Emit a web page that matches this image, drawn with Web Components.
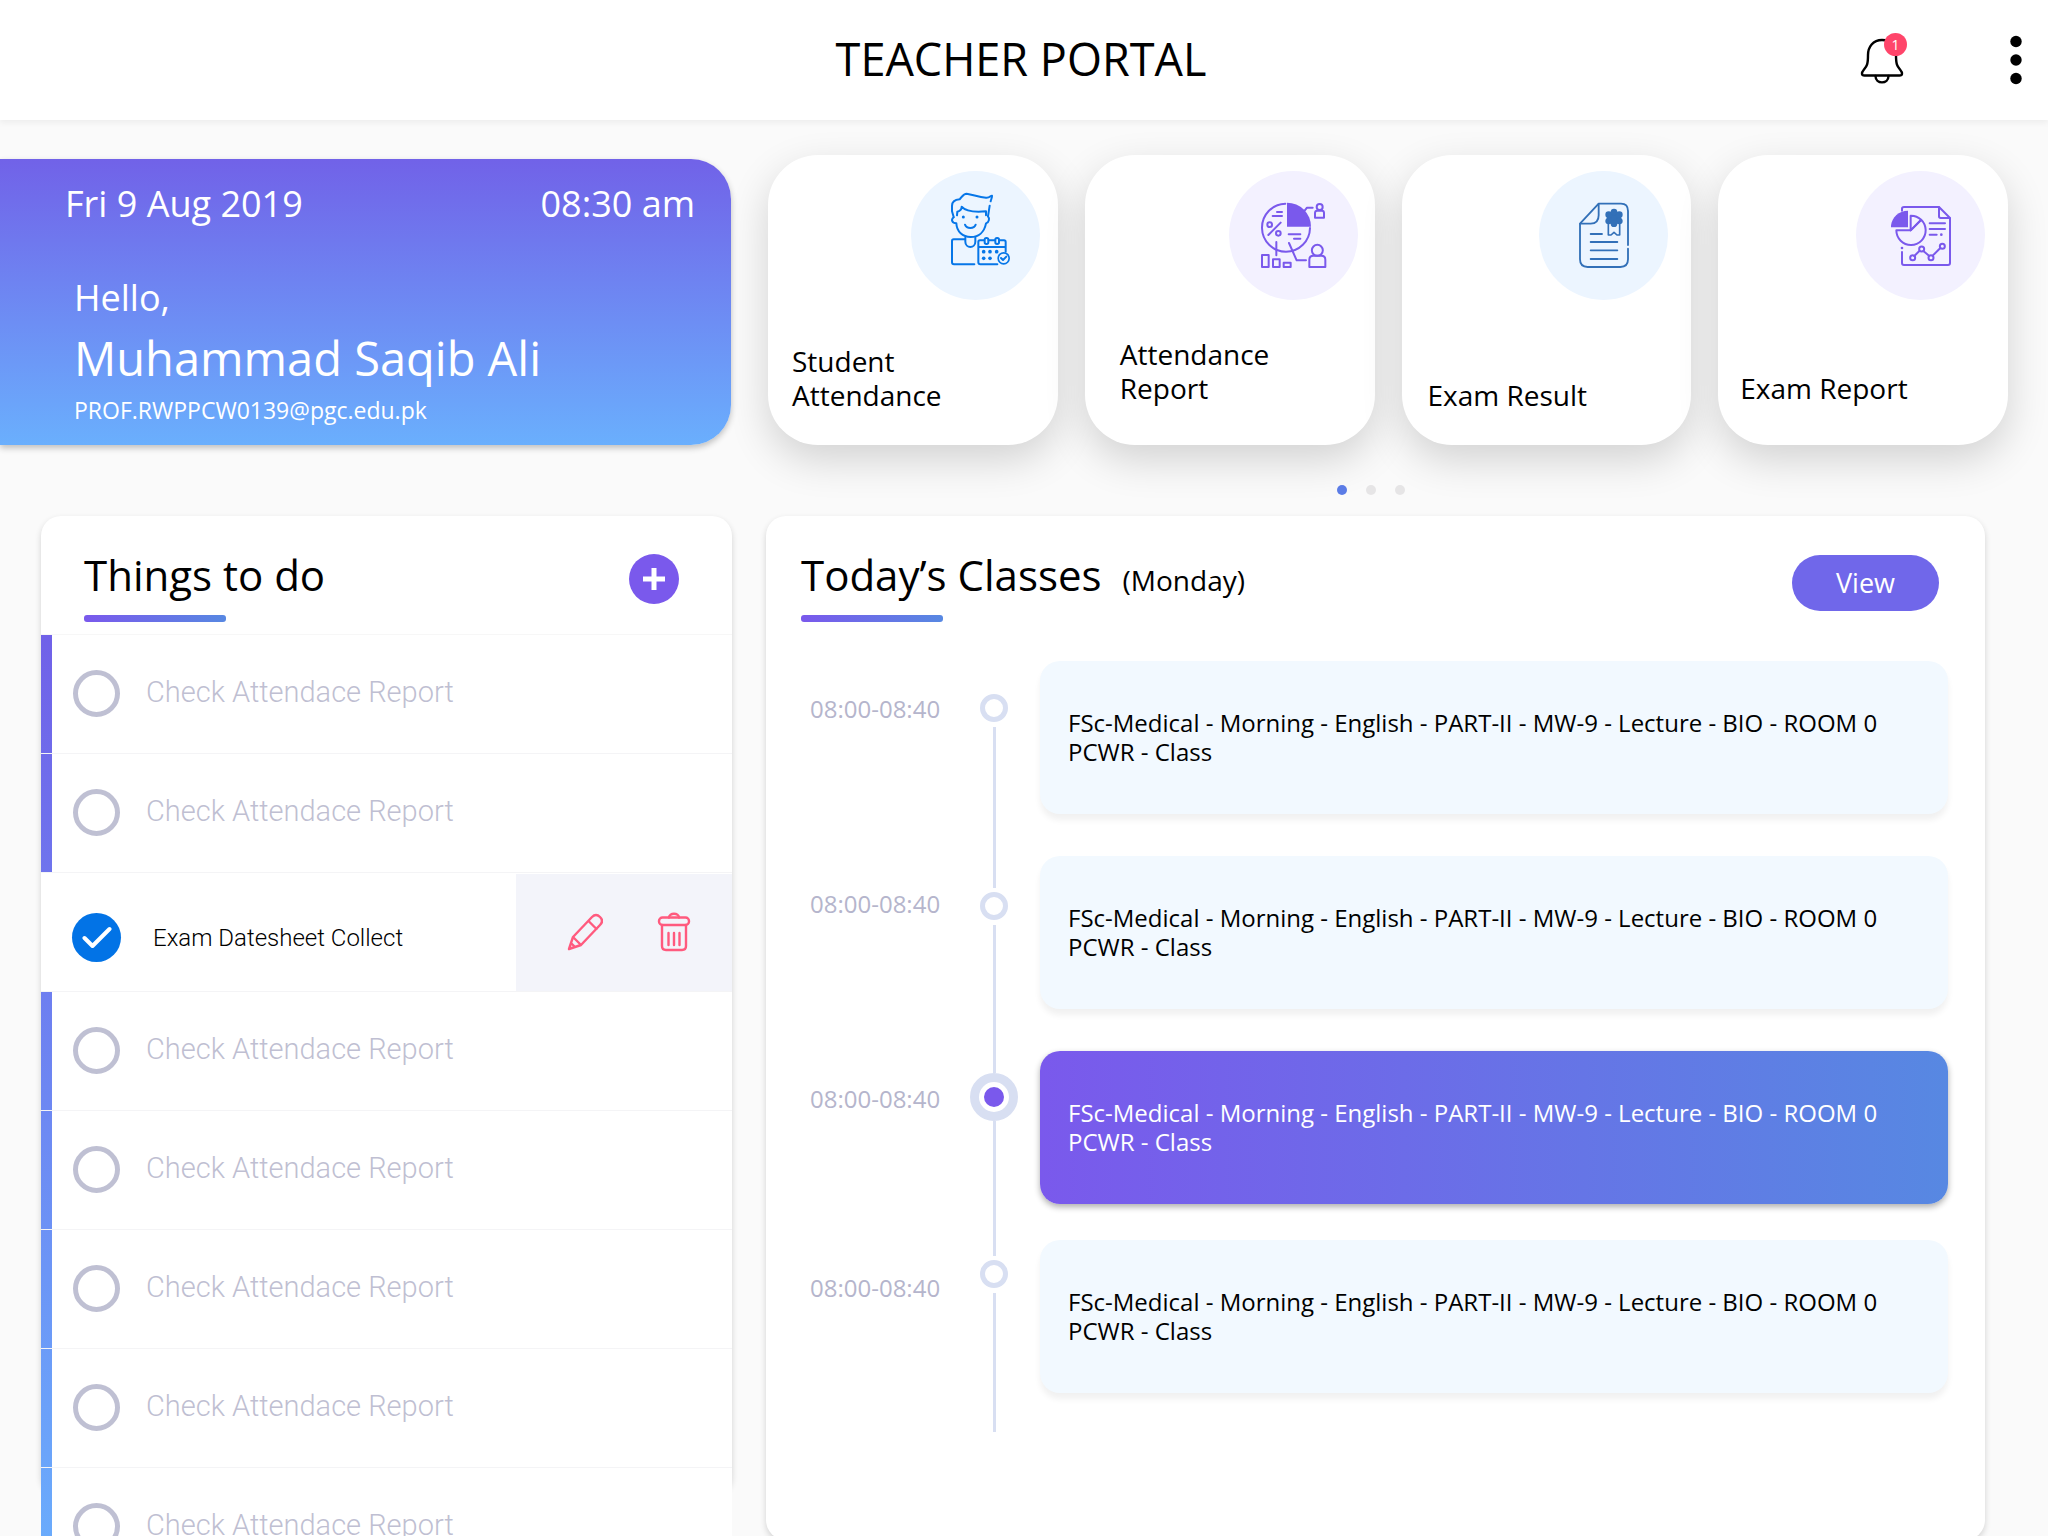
<!DOCTYPE html>
<html lang="en">
<head>
<meta charset="utf-8">
<meta name="viewport" content="width=device-width, initial-scale=1">
<title>Teacher Portal</title>
<style>
  html, body { margin: 0; height: 100%; }
  body {
    font-family: "Open Sans", "Noto Sans", sans-serif;
    color: #000;
    background: #fafafa;
    overflow: hidden;
    --violet: #7a59ec;
    --indigo: #7067ea;
    --blue: #5788e2;
    --mute: #b5b5cc;
    --rail: #d8dff2;
  }
</style>
</head>
<body>
<teacher-portal>
  <portal-header slot="header" count="1">TEACHER PORTAL</portal-header>

  <welcome-card slot="hero">
    <span slot="date">Fri 9 Aug 2019</span>
    <span slot="time">08:30 am</span>
    <span slot="greeting">Hello,</span>
    <span slot="name">Muhammad Saqib Ali</span>
    <span slot="mail">PROF.RWPPCW0139@pgc.edu.pk</span>
  </welcome-card>

  <nav-tile slot="tiles" icon="student" style="--inset:24px;--edge:18px">Student Attendance</nav-tile>
  <nav-tile slot="tiles" icon="attendance" tone="violet" style="--inset:35px;--edge:17px">Attendance Report</nav-tile>
  <nav-tile slot="tiles" icon="result" style="--inset:26px;--edge:23px">Exam Result</nav-tile>
  <nav-tile slot="tiles" icon="report" tone="violet" style="--inset:22px;--edge:23px">Exam Report</nav-tile>

  <todo-panel slot="board">
    <todo-item>Check Attendace Report</todo-item>
    <todo-item>Check Attendace Report</todo-item>
    <todo-item done>Exam Datesheet Collect</todo-item>
    <todo-item>Check Attendace Report</todo-item>
    <todo-item>Check Attendace Report</todo-item>
    <todo-item>Check Attendace Report</todo-item>
    <todo-item>Check Attendace Report</todo-item>
    <todo-item>Check Attendace Report</todo-item>
  </todo-panel>

  <class-panel slot="board" day="(Monday)">
    <class-slot time="08:00-08:40" first style="--lead:29px">FSc-Medical - Morning - English - PART-II - MW-9 - Lecture - BIO - ROOM 0 PCWR - Class</class-slot>
    <class-slot time="08:00-08:40" style="--lead:32px">FSc-Medical - Morning - English - PART-II - MW-9 - Lecture - BIO - ROOM 0 PCWR - Class</class-slot>
    <class-slot time="08:00-08:40" current style="--lead:22px;--tail:36px">FSc-Medical - Morning - English - PART-II - MW-9 - Lecture - BIO - ROOM 0 PCWR - Class</class-slot>
    <class-slot time="08:00-08:40" style="--lead:16px;--tail:39px">FSc-Medical - Morning - English - PART-II - MW-9 - Lecture - BIO - ROOM 0 PCWR - Class</class-slot>
  </class-panel>
</teacher-portal>

<script>
  class Base extends HTMLElement {
    connectedCallback() {
      if (this.shadowRoot) return;
      this.attachShadow({ mode: "open" }).innerHTML = this.render();
    }
  }

  const RESET = `
    *, *::before, *::after { box-sizing: border-box; }
    button { font: inherit; color: inherit; background: none; border: 0; padding: 0; margin: 0; cursor: pointer; }
    a { color: inherit; text-decoration: none; }
    svg { display: block; fill: none; stroke: currentColor; stroke-linecap: round; stroke-linejoin: round; }
    svg .f { fill: currentColor; stroke: none; }
  `;

  customElements.define("teacher-portal", class extends Base {
    render() {
      return `<style>${RESET}
        :host { display: flex; flex-direction: column; height: 100vh; overflow: hidden; }
        .hero { display: grid; grid-template-columns: 731fr 1240fr; column-gap: 37px; align-items: end;
                padding: 35px 40px 0 0; }
        .tiles { display: grid; grid-template-columns: repeat(4, 1fr); gap: 27px; }
        .pager { grid-column: 2; display: flex; justify-content: center; gap: 19px; padding: 40px 34px 21px 0; }
        .pager button { width: 10px; height: 10px; border-radius: 50%; background: #e6e5e6; }
        .pager button[aria-current] { background: #5b7ce6; }
        main { flex: 1; min-height: 0; display: grid; grid-template-columns: 691fr 1219fr;
               grid-template-rows: minmax(0, 1fr); column-gap: 34px; padding: 0 63px 0 41px; }
      </style>
      <slot name="header"></slot>
      <section class="hero">
        <slot name="hero"></slot>
        <nav class="tiles"><slot name="tiles"></slot></nav>
        <div class="pager">
          <button aria-label="Page one" aria-current="true"></button>
          <button aria-label="Page two"></button>
          <button aria-label="Page three"></button>
        </div>
      </section>
      <main><slot name="board"></slot></main>`;
    }
  });

  customElements.define("portal-header", class extends Base {
    render() {
      return `<style>${RESET}
        :host { display: block; flex: none; }
        header { display: grid; grid-template-columns: 1fr auto 1fr; align-items: center; height: 120px;
                 padding: 0 26px 0 20px; background: #fff; box-shadow: 0 3px 6px rgba(0,0,0,.05); }
        h1 { grid-column: 2; margin: 0; padding-bottom: 2px; font-size: 45px; line-height: 60px; font-weight: 400; }
        .tools { display: flex; justify-content: flex-end; align-items: center; gap: 106px; }
        .bell { position: relative; margin-top: 2px; }
        .bell span { position: absolute; top: -4px; right: -3px; width: 23px; height: 23px; border-radius: 50%;
                     background: #ff456a; color: #fff; font-size: 14px; line-height: 23px; text-align: center; }
      </style>
      <header>
        <h1><slot></slot></h1>
        <div class="tools">
          <button class="bell" aria-label="Notifications">
            <svg width="44" height="48" viewBox="0 0 44 48" stroke-width="2.4">
              <path d="M22 3C13 3 8 10 8 18C8 27 7 29 4 32.500C1 36 1.500 38.500 4.500 38.500H39.500C42.500 38.500 43 36 40 32.500C37 29 36 27 36 18C36 10 31 3 22 3Z"/>
              <path d="M15.500 39C15.500 47.500 28.500 47.500 28.500 39"/>
            </svg>
            <span>${this.getAttribute("count")}</span>
          </button>
          <button aria-label="Menu">
            <svg width="12" height="50" viewBox="0 0 12 50">
              <circle class="f" cx="6" cy="6.500" r="5.700"/><circle class="f" cx="6" cy="25" r="5.700"/><circle class="f" cx="6" cy="43.500" r="5.700"/>
            </svg>
          </button>
        </div>
      </header>`;
    }
  });

  customElements.define("welcome-card", class extends Base {
    render() {
      return `<style>${RESET}
        :host { display: flex; flex-direction: column; height: 286px; padding: 21px 36px 19px 65px;
                color: #fff; background: linear-gradient(#7162e8, #6aaffd);
                border-radius: 0 40px 40px 0; box-shadow: 0 3px 6px rgba(0,0,0,.24); box-sizing: border-box; }
        .when { display: flex; justify-content: space-between; font-size: 36px; line-height: 48px; }
        .who { margin-top: auto; padding-left: 9px; display: flex; flex-direction: column; gap: 6px; }
        .hi { font-size: 36px; line-height: 48px; }
        .name { font-size: 47px; line-height: 60px; }
        .mail { font-size: 23px; line-height: 32px; }
      </style>
      <div class="when"><slot name="date"></slot><slot name="time"></slot></div>
      <div class="who">
        <div class="hi"><slot name="greeting"></slot></div>
        <div class="name"><slot name="name"></slot></div>
        <div class="mail"><slot name="mail"></slot></div>
      </div>`;
    }
  });

  const TILE_ICONS = {
    student: `<svg viewBox="3 3 387 387" stroke-width="6">
      <path d="M242 94C243 88 247 82 246 77C242 76 240 84 228 83C205 81 190 74 170 71C160 71 155 82 149 88C134 89 126 95 126 108V124L131 141"/>
      <path d="M141 136L142 125C150 123 155 117 155 110C166 123 196 127 228 124V136M239 107L234 139"/>
      <path d="M131 142C122 149 126 160 139 160C140 185 158 201 182 201C206 201 223 186 228 160C238 157 239 144 234 139"/>
      <circle class="f" cx="160" cy="141" r="4.500"/><circle class="f" cx="201" cy="141" r="4.500"/>
      <path d="M165 164C170 177 192 177 197 164"/>
      <path d="M166 203V215C166 236 196 236 196 215V203M166 208H131Q126 208 126 213V277Q126 283 132 283H193"/>
      <path d="M222 211H210Q205 211 205 216V277Q205 283 211 283H262M236 211H255M269 211H282Q287 211 287 216V245M206 231H286"/>
      <rect x="224" y="204" width="11" height="18" rx="5"/><rect x="256" y="204" width="11" height="18" rx="5"/>
      <g class="f"><circle cx="221" cy="245" r="5.500"/><circle cx="240" cy="245" r="5.500"/><circle cx="260" cy="245" r="5.500"/><circle cx="221" cy="265" r="5.500"/><circle cx="240" cy="265" r="5.500"/></g>
      <circle cx="281" cy="265" r="16.500" stroke-width="5"/><path d="M273 264L279 270L289 260"/>
    </svg>`,
    attendance: `<svg viewBox="957 3 387 387" stroke-width="6" stroke-linecap="butt">
      <path d="M1126 101A72 72 0 1 0 1200 174"/>
      <path class="f" d="M1131 98A72 72 0 0 1 1203 170.500H1131Z"/>
      <path d="M1101 126H1116M1088 138H1116M1136 193H1171M1152 206H1171M1112 158L1075 195"/>
      <circle cx="1079" cy="164" r="7"/><circle cx="1105" cy="190" r="7"/>
      <path d="M1184 122L1191 113H1208"/><circle cx="1229" cy="111" r="9"/>
      <path d="M1215 143V129Q1215 122 1222 122H1236Q1242 122 1242 129V143Z"/>
      <path d="M1099 216V256M1137 219L1160 271H1188"/>
      <circle cx="1222" cy="241" r="16.500"/><path d="M1198 291V269Q1198 257 1210 257H1234Q1246 257 1246 269V291Z"/>
      <rect x="1056" y="255" width="20" height="36"/><rect x="1089" y="268" width="20" height="23"/><rect x="1121" y="278" width="21" height="13"/>
    </svg>`,
    result: `<svg viewBox="3 3 387 387" stroke-width="5.500">
      <path d="M270 225V123Q270 101 249 101H182L126 161V268Q126 291 149 291H247Q270 291 270 268V236"/>
      <path d="M182 102V136Q182 161 158 161H127"/>
      <path d="M158 192H192M158 216H238M158 241H238M158 267H238"/>
      <path stroke-width="5" d="M211 160V195H219L228 187L237 195H245V160"/>
      <g class="f"><circle cx="228" cy="143" r="20"/><circle cx="228" cy="126" r="10"/><circle cx="212" cy="134" r="10"/><circle cx="244" cy="134" r="10"/><circle cx="212" cy="153" r="10"/><circle cx="244" cy="153" r="10"/><circle cx="228" cy="161" r="10"/></g>
    </svg>`,
    report: `<svg viewBox="954 3 387 387" stroke-width="6">
      <path d="M1092 122V116Q1092 111 1098 111H1203L1236 144V279Q1236 285 1230 285H1098Q1092 285 1092 279V246"/>
      <path d="M1203 112V139Q1203 144 1208 144H1235"/><circle class="f" cx="1092" cy="234" r="4"/>
      <path class="f" d="M1110 122V171.500H1059V166C1062 142 1082 122 1110 122Z"/>
      <path d="M1118 181V137A44 44 0 1 1 1075 181ZL1149 150"/>
      <path d="M1118 181L1149 150"/>
      <path d="M1175 160H1221M1175 177H1221M1175 194H1196"/><circle class="f" cx="1210" cy="194" r="4"/>
      <path d="M1129 258L1144 243M1156 243L1173 257M1184 257L1207 234"/>
      <circle cx="1124" cy="263" r="7.500"/><circle cx="1151" cy="237" r="7.500"/><circle cx="1179" cy="263" r="7.500"/><circle cx="1213" cy="229" r="7.500"/>
    </svg>`
  };

  customElements.define("nav-tile", class extends Base {
    render() {
      return `<style>${RESET}
        :host { display: block; --ink: #0676e8; --disc: #ecf5ff; --floor: 33px; }
        :host([icon="result"]) { --ink: #3270b8; }
        :host([tone="violet"]) { --ink: #7a59ec; --disc: #f3f1ff; --floor: 40px; }
        a { display: flex; flex-direction: column; justify-content: space-between; height: 290px;
            padding: 16px var(--edge) var(--floor) var(--inset); background: #fff; border-radius: 50px;
            box-shadow: 0 15px 40px rgba(0,0,0,.16); }
        .disc { align-self: flex-end; width: 129px; height: 129px; border-radius: 50%;
                background: var(--disc); color: var(--ink); }
        .label { font-size: 28px; line-height: 34px; max-width: 200px; }
      </style>
      <a href="#${this.getAttribute("icon")}">
        <span class="disc">${TILE_ICONS[this.getAttribute("icon")]}</span>
        <span class="label"><slot></slot></span>
      </a>`;
    }
  });

  const PANEL = `
    :host { background: #fff; border-radius: 20px; box-shadow: 0 3px 6px rgba(0,0,0,.16); }
    header { display: flex; justify-content: space-between; align-items: flex-start; padding-top: 31px; }
    h2 { margin: 0; font-size: 42px; line-height: 56px; font-weight: 400; }
    h2::after { content: ""; display: block; width: 142px; height: 7px; margin-top: 12px; border-radius: 3px;
                background: linear-gradient(90deg, var(--violet), var(--blue)); }
  `;

  customElements.define("todo-panel", class extends Base {
    render() {
      return `<style>${RESET}${PANEL}
        :host { display: block; margin-bottom: 42px; }
        header { padding-left: 43px; padding-right: 53px; padding-bottom: 12px; border-bottom: 1px solid #f7f7f7; }
        button { width: 50px; height: 50px; margin-top: 7px; border-radius: 50%; background: var(--violet);
                 display: grid; place-items: center; color: #fff; }
        .list { background: linear-gradient(#7061e8, #6aaffd) left / 11px 100% no-repeat, #fff; }
      </style>
      <header>
        <h2>Things to do</h2>
        <button aria-label="Add task">
          <svg width="22" height="22" viewBox="0 0 22 22"><path class="f" d="M8.500 0H13.500V8.500H22V13.500H13.500V22H8.500V13.500H0V8.500H8.500Z"/></svg>
        </button>
      </header>
      <div class="list"><slot></slot></div>`;
    }
  });

  customElements.define("todo-item", class extends Base {
    render() {
      const done = this.hasAttribute("done");
      return `<style>${RESET}
        :host { display: flex; height: 119px; border-bottom: 1px solid #f4f4f6; box-sizing: border-box;
                font-family: Roboto, sans-serif; font-weight: 300; font-size: 29px; color: #bfbfd2; }
        label { flex: 1; display: flex; align-items: center; gap: 26px; padding: 0 0 2px 32px; }
        .box { display: grid; place-items: center; }
        .box > * { grid-area: 1 / 1; }
        input { appearance: none; margin: 0; width: 47px; height: 47px; border: 5px solid #bfc0d3; border-radius: 50%; }
        .box svg { color: #fff; z-index: 1; }
        .text { line-height: 40px; padding-bottom: 2px; }
        :host([done]) { background: #fff; color: #000; font-size: 24px; }
        :host([done]) label { padding: 11px 0 0 31px; gap: 32px; }
        :host([done]) .text { padding: 0; }
        :host([done]) input { width: 49px; height: 49px; border: 0; background: #0273e6; }
        .actions { display: flex; justify-content: center; align-items: center; gap: 54px; width: 216px;
                   padding: 0 0 2px 10px; margin-top: 1px; background: #f3f4fa; color: #ff5a7e; }
      </style>
      <label>
        <span class="box"><input type="checkbox" ${done ? "checked" : ""}>
          ${done ? `<svg width="30" height="24" viewBox="0 0 30 24" stroke-width="4"><path d="M2.500 12L10.500 20L27.500 3"/></svg>` : ""}
        </span>
        <span class="text"><slot></slot></span>
      </label>
      ${done ? `<div class="actions">
        <button aria-label="Edit">
          <svg width="36" height="38" viewBox="0 0 36 38" stroke-width="2.400">
            <path d="M2 36L6 24L25 4Q29 0 33 4Q37 8 33 12L14 32ZM6 24L14 32M21.500 8L29.500 16M4 30L8 34"/>
          </svg>
        </button>
        <button aria-label="Delete">
          <svg width="34" height="40" viewBox="0 0 34 40" stroke-width="2.400">
            <path d="M12 5.500C12 .5 22 .5 22 5.500M5 13V34Q5 38 9 38H25Q29 38 29 34V13M11.500 21V33M17 21V33M22.500 21V33"/>
            <rect x="2" y="5.500" width="30" height="7.500" rx="3.500"/>
          </svg>
        </button>
      </div>` : ""}`;
    }
  });

  customElements.define("class-panel", class extends Base {
    render() {
      return `<style>${RESET}${PANEL}
        :host { display: block; margin-bottom: -4px; }
        header { padding-left: 35px; padding-right: 46px; }
        .title { display: flex; align-items: baseline; gap: 21px; font-size: 28px; }
        button { width: 147px; height: 56px; margin-top: 8px; border-radius: 28px; background: var(--indigo);
                 color: #fff; font-size: 27px; line-height: 56px; }
        .slots { padding: 39px 37px 0 43px; }
      </style>
      <header>
        <div class="title"><h2>Today’s Classes</h2><span>${this.getAttribute("day")}</span></div>
        <button>View</button>
      </header>
      <div class="slots"><slot></slot></div>`;
    }
  });

  customElements.define("class-slot", class extends Base {
    render() {
      return `<style>${RESET}
        :host { display: grid; grid-template-columns: 161px 48px 1fr; font-size: 24px; }
        time { padding: 33px 0 0 1px; line-height: 30px; color: var(--mute); }
        .rail { display: flex; flex-direction: column; align-items: center; }
        .rail i { width: 3px; background: var(--rail); }
        .lead { height: var(--lead); }
        .rest { flex: 1; }
        .node { width: 28px; height: 28px; margin: 4px 0 5px; border: 5px solid var(--rail); border-radius: 50%; }
        :host([first]) .lead { visibility: hidden; }
        .card { display: flex; align-items: center; min-height: 153px; padding: 0 28px 2px;
                margin: 0 0 var(--tail, 42px) 22px; line-height: 29px; border-radius: 20px;
                background: #f2f9ff; box-shadow: 0 6px 6px rgba(0,0,0,.06); }
        :host([current]) .node { width: 48px; height: 48px; margin: 0; border-width: 9px; display: grid; place-items: center; }
        :host([current]) .node::after { content: ""; width: 20px; height: 20px; border-radius: 50%; background: var(--violet); }
        :host([current]) .card { color: #fff; background: linear-gradient(90deg, var(--violet), var(--blue));
                                 box-shadow: 0 3px 6px rgba(0,0,0,.32); }
      </style>
      <time>${this.getAttribute("time")}</time>
      <div class="rail"><i class="lead"></i><span class="node"></span><i class="rest"></i></div>
      <div class="card"><span><slot></slot></span></div>`;
    }
  });
</script>
</body>
</html>
